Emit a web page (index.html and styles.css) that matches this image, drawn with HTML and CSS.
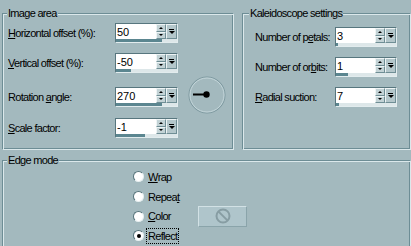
FILE: index.html
```html
<!DOCTYPE html>
<html lang="en">

<head>
    <meta charset="UTF-8">
    <title>Kaleidoscope</title>
    <link rel="stylesheet" href="styles.css">
</head>

<body>

    <div class="top">
        <fieldset class="group image">
            <legend>Image area</legend>

            <div class="row">
                <label><u>H</u>orizontal offset (%):</label>
                <div class="spin">
                    <span class="val">50</span>
                    <span class="btns"><i class="up"></i><i class="dn"></i></span>
                    <span class="drop"></span>
                    <span class="bar"><b style="width: 75%;"></b></span>
                </div>
            </div>

            <div class="row">
                <label><u>V</u>ertical offset (%):</label>
                <div class="spin">
                    <span class="val">-50</span>
                    <span class="btns"><i class="up"></i><i class="dn"></i></span>
                    <span class="drop"></span>
                    <span class="bar"><b style="width: 25%;"></b></span>
                </div>
            </div>

            <div class="row rot">
                <label>Rotation <u>a</u>ngle:</label>
                <div class="spin">
                    <span class="val">270</span>
                    <span class="btns"><i class="up"></i><i class="dn"></i></span>
                    <span class="drop"></span>
                    <span class="bar"><b style="width: 75%;"></b></span>
                </div>
                <svg class="dial" width="38" height="38" viewBox="0 0 38 38">
                    <circle cx="19" cy="19" r="18" fill="none" stroke="#7b979e" stroke-width="1" />
                    <circle cx="19" cy="19" r="17" fill="none" stroke="#c4d6da" stroke-width="1" />
                    <line x1="5" y1="18.5" x2="18" y2="18.5" stroke="#000" stroke-width="2" />
                    <circle cx="18.5" cy="18.5" r="3.2" fill="#000" />
                </svg>
            </div>

            <div class="row scale">
                <label><u>S</u>cale factor:</label>
                <div class="spin">
                    <span class="val">-1</span>
                    <span class="btns"><i class="up"></i><i class="dn"></i></span>
                    <span class="drop"></span>
                    <span class="bar"><b style="width: 47%;"></b></span>
                </div>
            </div>
        </fieldset>

        <fieldset class="group kaleido">
            <legend>Kaleidoscope settings</legend>

            <div class="row">
                <label>Number of p<u>e</u>tals:</label>
                <div class="spin">
                    <span class="val">3</span>
                    <span class="btns"><i class="up"></i><i class="dn"></i></span>
                    <span class="drop"></span>
                    <span class="bar"><b style="width: 4%;"></b></span>
                </div>
            </div>

            <div class="row">
                <label>Number of or<u>b</u>its:</label>
                <div class="spin">
                    <span class="val">1</span>
                    <span class="btns"><i class="up"></i><i class="dn"></i></span>
                    <span class="drop"></span>
                    <span class="bar"><b style="width: 20%;"></b></span>
                </div>
            </div>

            <div class="row">
                <label><u>R</u>adial suction:</label>
                <div class="spin">
                    <span class="val">7</span>
                    <span class="btns"><i class="up"></i><i class="dn"></i></span>
                    <span class="drop"></span>
                    <span class="bar"><b style="width: 5%;"></b></span>
                </div>
            </div>
        </fieldset>
    </div>

    <fieldset class="group edge">
        <legend>Edge mode</legend>

        <div class="modes">
            <label class="radio"><span class="dot"></span><u>W</u>rap</label>
            <label class="radio"><span class="dot"></span>Repea<u>t</u></label>
            <label class="radio"><span class="dot"></span><u>C</u>olor</label>
            <div class="swatch">
                <svg width="18" height="18" viewBox="0 0 18 18">
                    <circle cx="9" cy="9" r="6.5" fill="none" stroke="#879da3" stroke-width="2" />
                    <line x1="4.6" y1="4.6" x2="13.4" y2="13.4" stroke="#879da3" stroke-width="2" />
                </svg>
            </div>
            <label class="radio"><span class="dot on"></span><span class="focus">Reflect</span></label>
        </div>
    </fieldset>

</body>

</html>
```

FILE: styles.css
```css
* {
    box-sizing: border-box;
}

body {
    margin: 0;
    width: 411px;
    height: 246px;
    overflow: hidden;
    background-color: #a3b9be;
    font-family: "Liberation Sans", Arial, sans-serif;
    font-size: 11px;
    letter-spacing: -0.7px;
    color: #000;
}

u {
    text-decoration-thickness: 1px;
    text-underline-offset: 1px;
}

.top {
    display: flex;
    gap: 8px;
    padding: 7px 0 0 2px;
}

/* etched group box */
.group {
    margin: 0;
    min-width: 0;
    border: 1px solid;
    border-color: #6d8d95 #dbe8eb #dbe8eb #6d8d95;
    box-shadow: inset 1px 1px 0 #dbe8eb, inset -1px -1px 0 #6d8d95;
}

legend {
    background-color: #a3b9be;
    padding: 0 1px;
    margin-left: -1px;
    line-height: 13px;
}

.image {
    width: 232px;
    height: 143px;
    padding: 3px 0 0 5px;
}

.kaleido {
    width: 169px;
    height: 143px;
    padding: 7px 0 0 7px;
}

.kaleido .row {
    margin-left: 5px;
}

.row {
    display: flex;
    align-items: center;
    height: 20px;
}

.row + .row {
    margin-top: 10px;
}

.row.rot {
    margin-top: 14px;
}

.row.scale {
    margin-top: 11px;
}

.image label {
    width: 107px;
}

.kaleido label {
    width: 80px;
}

/* spin box with slider strip */
.spin {
    display: grid;
    grid-template-columns: 1fr 10px 11px;
    grid-template-rows: 1fr 3px;
    width: 63px;
    height: 20px;
    border: 1px solid;
    border-color: #57767e #e2ecee #e2ecee #57767e;
    background: #fff;
}

.kaleido .spin {
    width: 62px;
}

.val {
    padding: 1px 0 0 1px;
    line-height: 14px;
    letter-spacing: 0;
}

.btns {
    display: flex;
    flex-direction: column;
    background: #c3d3d6;
}

.btns i {
    flex: 1;
    display: flex;
    align-items: center;
    justify-content: center;
    border: 1px solid;
    border-color: #eef4f5 #6f8e95 #6f8e95 #eef4f5;
}

.btns i::after {
    content: "";
    border-left: 2px solid transparent;
    border-right: 2px solid transparent;
}

.btns .up::after {
    border-bottom: 2px solid #000;
}

.btns .dn::after {
    border-top: 2px solid #000;
}

.drop {
    display: flex;
    flex-direction: column;
    align-items: center;
    justify-content: center;
    gap: 1px;
    background: #b4c7cb;
    border: 1px solid;
    border-color: #eef4f5 #6f8e95 #6f8e95 #eef4f5;
}

.drop::before {
    content: "";
    width: 5px;
    height: 1px;
    background: #000;
}

.drop::after {
    content: "";
    border-left: 3px solid transparent;
    border-right: 3px solid transparent;
    border-top: 3px solid #000;
}

.bar {
    grid-column: 1 / -1;
    background: #dde7e9;
}

.bar b {
    display: block;
    height: 100%;
    background: #5b8690;
}

.dial {
    margin: 0 0 5px 10px;
    flex-shrink: 0;
}

/* edge mode */
.edge {
    margin: 4px 0 0 2px;
    width: 409px;
    height: 110px;
    padding: 0 0 0 5px;
}

.modes {
    display: grid;
    grid-template-columns: 65px auto;
    grid-auto-rows: 19.7px;
    margin-left: 125px;
}

.radio {
    display: flex;
    align-items: center;
    grid-column: 1;
}

.dot {
    width: 11px;
    height: 11px;
    margin-right: 4px;
    border-radius: 50%;
    background: #fff;
    border: 1px solid;
    border-color: #55737a #e6eef0 #e6eef0 #55737a;
    display: flex;
    align-items: center;
    justify-content: center;
}

.dot.on::after {
    content: "";
    width: 4px;
    height: 4px;
    border-radius: 50%;
    background: #000;
}

.focus {
    border: 1px dotted #000;
    padding: 0 1px;
    margin-left: -2px;
    line-height: 14px;
}

.swatch {
    grid-column: 2;
    grid-row: 3;
    align-self: center;
    width: 49px;
    height: 21px;
    display: flex;
    align-items: center;
    justify-content: center;
    background: #afc5cb;
    border: 1px solid;
    border-color: #d2e1e5 #8aa4aa #8aa4aa #d2e1e5;
}
```
